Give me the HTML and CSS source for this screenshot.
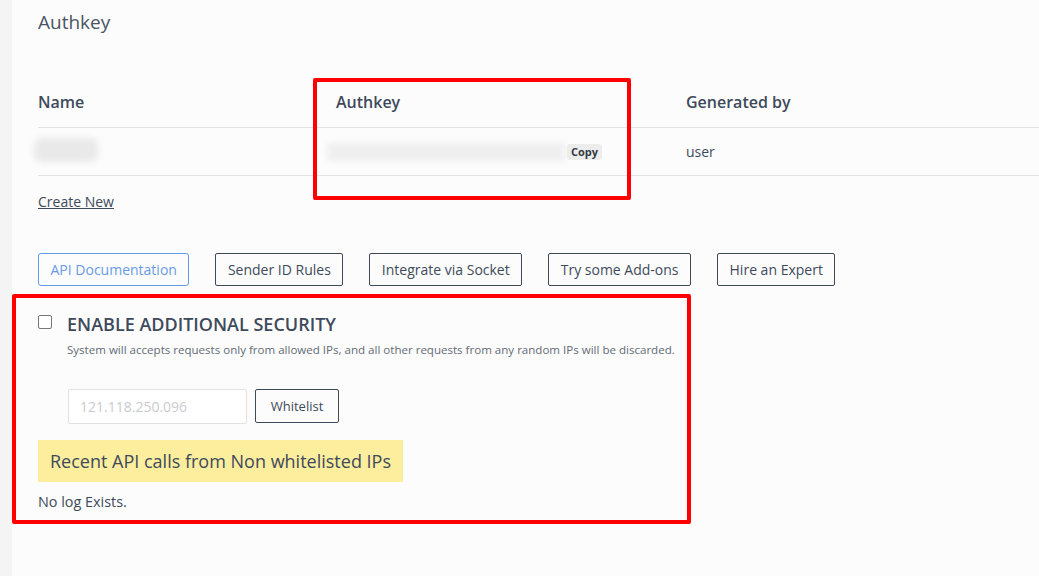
FILE: index.html
```html
<!DOCTYPE html>
<html>
<head>
<meta charset="utf-8">
<link rel="stylesheet" href="styles.css">
</head>
<body>
<div class="page">
  <aside class="strip"></aside>
  <main class="main">
    <h1 class="title">Authkey</h1>
    <div class="table">
      <div class="row head">
        <div class="c1">Name</div>
        <div class="c2">Authkey</div>
        <div class="c3">Generated by</div>
      </div>
      <div class="row body">
        <div class="c1"><span class="blur blur-name"></span></div>
        <div class="c2"><span class="blur blur-key"></span><span class="copy">Copy</span></div>
        <div class="c3">user</div>
      </div>
    </div>
    <a class="create" href="#">Create New</a>
    <div class="btns">
      <button class="btn btn-blue">API Documentation</button>
      <button class="btn">Sender ID Rules</button>
      <button class="btn">Integrate via Socket</button>
      <button class="btn">Try some Add-ons</button>
      <button class="btn">Hire an Expert</button>
    </div>
    <section class="security">
      <div class="sec-head">
        <span class="checkbox"></span>
        <h2 class="sec-title">ENABLE ADDITIONAL SECURITY</h2>
      </div>
      <p class="sec-desc">System will accepts requests only from allowed IPs, and all other requests from any random IPs will be discarded.</p>
      <div class="ip-row">
        <input class="ip-input" type="text" placeholder="121.118.250.096">
        <button class="btn btn-white">Whitelist</button>
      </div>
      <div class="recent">Recent API calls from Non whitelisted IPs</div>
      <p class="nolog">No log Exists.</p>
    </section>
  </main>
  <div class="mark mark-key"></div>
  <div class="mark mark-sec"></div>
</div>
</body>
</html>
```
FILE: styles.css
```css
html, body {
  margin: 0;
  padding: 0;
  height: 100%;
}
body {
  background: #fcfcfc;
  font-family: "Open Sans", "Noto Sans", sans-serif;
  color: #3e4a5b;
  overflow: hidden;
}
.page {
  position: relative;
  display: flex;
  min-height: 576px;
}
.strip {
  width: 12px;
  flex: none;
  background: #f4f4f4;
}
.main {
  flex: 1;
  padding: 10px 0 0 26px;
  min-width: 0;
}
.title {
  margin: 0;
  font-size: 19px;
  font-weight: 400;
  line-height: 24px;
  color: #4a5463;
}
.table {
  margin-top: 44px;
}
.row {
  display: flex;
  align-items: center;
  border-bottom: 1px solid #e3e3e3;
}
.row.head {
  height: 50px;
  font-size: 16px;
  font-weight: 600;
  padding-bottom: 2px;
  box-sizing: border-box;
}
.row.body {
  height: 48px;
  font-size: 14px;
  box-sizing: border-box;
}
.c1 { width: 298px; flex: none; }
.c2 { width: 350px; flex: none; display: flex; align-items: center; }
.c3 { flex: 1; }
.blur {
  display: inline-block;
  background: #ececec;
  filter: blur(3px);
}
.blur-name {
  width: 64px;
  height: 24px;
  margin-left: -4px;
  border-radius: 8px;
  background: #e9e9e9;
}
.blur-key {
  width: 238px;
  height: 18px;
  margin-left: -9px;
  background: #efefef;
}
.copy {
  display: inline-block;
  margin-left: 2px;
  background: #ececec;
  border-radius: 3px;
  font-size: 11px;
  font-weight: 700;
  line-height: 16px;
  padding: 0 4px;
  color: #333a44;
}
.create {
  display: inline-block;
  margin-top: 16px;
  font-size: 14px;
  line-height: 20px;
  color: #3e4a5b;
  text-decoration: underline;
}
.btns {
  display: flex;
  gap: 26px;
  margin-top: 41px;
}
.btn {
  height: 33px;
  padding: 0 11.5px;
  background: transparent;
  border: 1px solid #3e4a5b;
  border-radius: 2px;
  font-family: "Open Sans", "Noto Sans", sans-serif;
  font-size: 14px;
  color: #3e4a5b;
}
.btn-blue {
  border-color: #5f9cf0;
  color: #6a9ae8;
  border-radius: 3px;
}
.security {
  margin-top: 26px;
}
.sec-head {
  display: flex;
  align-items: center;
  gap: 15px;
}
.checkbox {
  width: 12px;
  height: 12px;
  border: 1px solid #767676;
  border-radius: 2px;
  background: #fff;
  margin-top: -4px;
}
.sec-title {
  margin: 0;
  font-size: 18px;
  font-weight: 600;
  line-height: 24px;
  color: #3e4a5b;
}
.sec-desc {
  margin: 6px 0 0 29px;
  font-size: 11.55px;
  line-height: 16px;
  color: #636b76;
}
.ip-row {
  display: flex;
  gap: 8px;
  margin: 31px 0 0 30px;
}
.ip-input {
  width: 179px;
  height: 35px;
  box-sizing: border-box;
  border: 1px solid #e2e2e2;
  border-radius: 2px;
  background: #fff;
  padding: 0 11px;
  font-family: "Open Sans", "Noto Sans", sans-serif;
  font-size: 14px;
  color: #3e4a5b;
}
.ip-input::placeholder {
  color: #c9cbcf;
}
.btn-white {
  height: 34px;
  width: 84px;
  padding: 0;
  font-size: 13px;
}
.recent {
  display: inline-block;
  margin-top: 16px;
  background: #fdee9e;
  height: 42px;
  line-height: 42px;
  padding: 0 12px;
  font-size: 18px;
  color: #3e4a5b;
}
.nolog {
  margin: 10px 0 0;
  font-size: 14.4px;
  line-height: 20px;
}
.mark {
  position: absolute;
  border: 4px solid #ff0000;
  border-radius: 2px;
  box-sizing: border-box;
  pointer-events: none;
}
.mark-key {
  left: 313px;
  top: 78px;
  width: 318px;
  height: 122px;
}
.mark-sec {
  left: 12px;
  top: 294px;
  width: 679px;
  height: 230px;
}
```
